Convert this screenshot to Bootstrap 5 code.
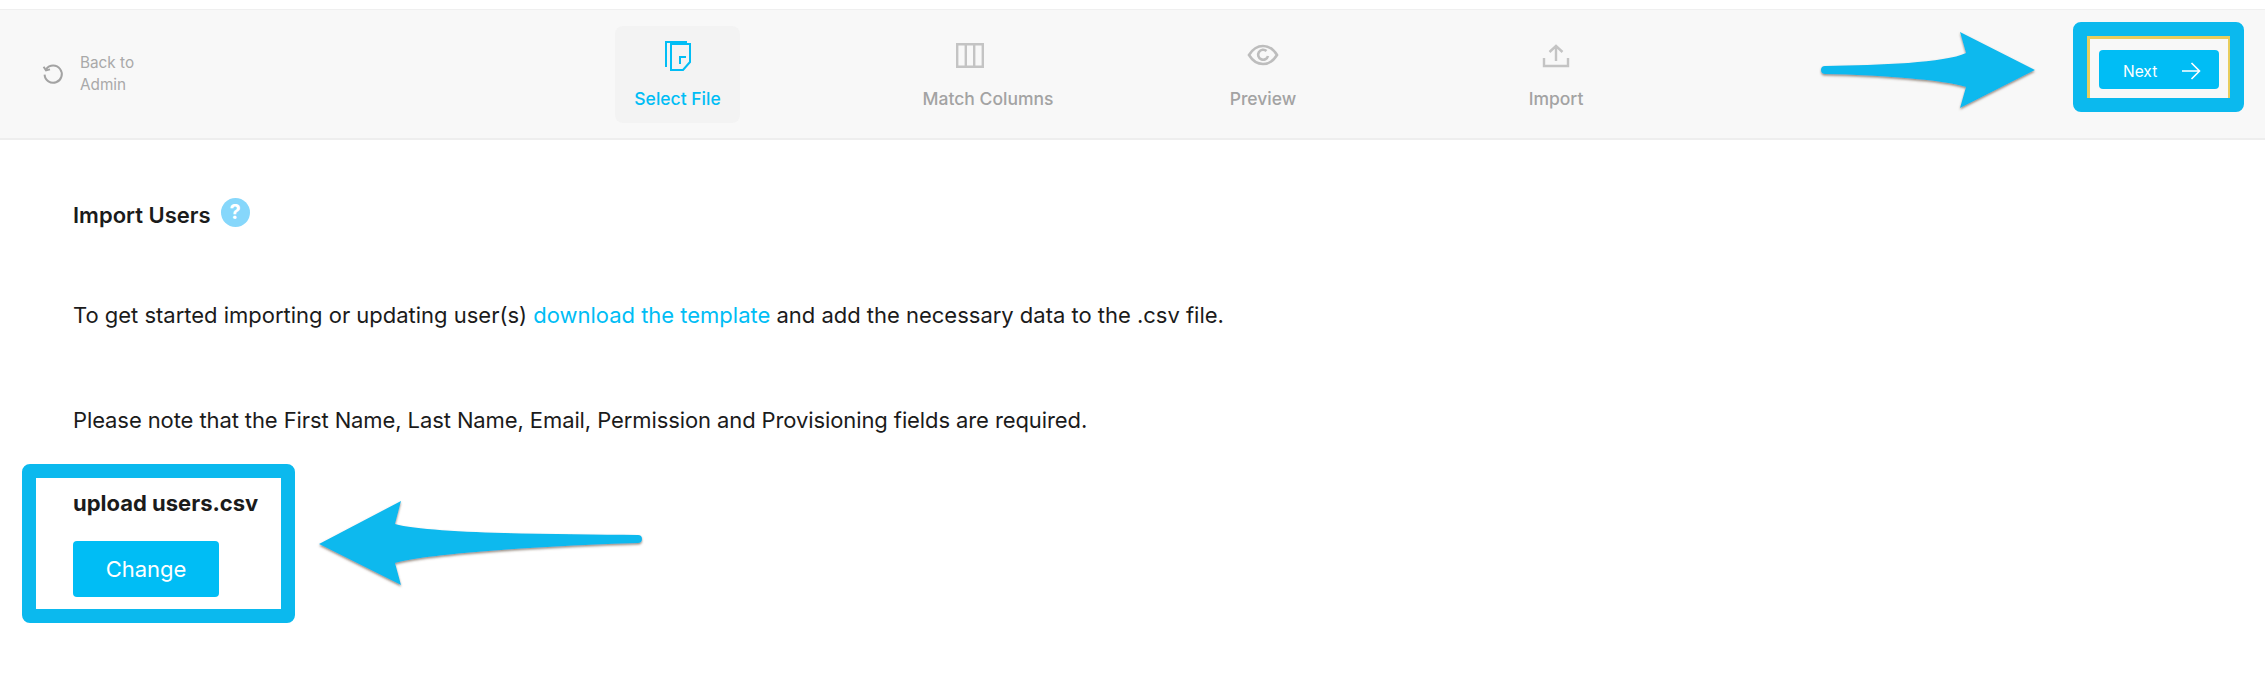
<!DOCTYPE html>
<html lang="en">
<head>
<meta charset="utf-8">
<title>Import Users</title>
<link href="https://cdn.jsdelivr.net/npm/bootstrap@5.3.0/dist/css/bootstrap.min.css" rel="stylesheet">
<style>
body{font-family:Inter,"Liberation Sans",sans-serif;color:#1b1b1b;background:#fff;height:690px;overflow:hidden}
.topbar{margin-top:9px;margin-right:3px;height:131px;background:#f8f8f8;border-top:1px solid #efefef;border-bottom:2px solid #eee}
.backlink{width:615px;padding-left:42px;color:#a9a9a9;font-size:15.300px;line-height:22px;text-decoration:none}
.backlink svg{width:22px;height:22px;margin-right:16px}
.stepitem{display:flex;flex-direction:column;align-items:center;height:97px;padding-top:13px;color:#a3a3a3;font-size:17.500px;font-weight:500;white-space:nowrap;text-decoration:none;border-radius:8px}
.stepitem svg{display:block;height:32px}
.stepitem span{margin-top:16px;line-height:24px}
.step-a{width:125px;background:#f3f3f3;color:#00bdf5}
.step-b{width:170px;margin-left:163px}
.step-b svg{margin-left:-36px}
.step-c{width:106px;margin-left:137px}
.step-d{width:94px;margin-left:193px}
.nextbtn{position:absolute;left:2099px;top:50px;width:120px;height:39px;background:#00bdf5;border:0;color:#fff;font-size:15.500px;border-radius:4px;padding:5px 0 0 24px;text-align:left}
.nextbtn svg{width:20px;height:20px;margin-left:24px;vertical-align:-4px}
.mainarea{padding-left:73px}
.pagetitle{margin:62px 0 0;height:26px;font-size:22px;font-weight:600;line-height:26px;display:flex;align-items:center}
.helpdot{display:flex;align-items:center;justify-content:center;width:29px;height:29px;border-radius:50%;background:#86d7fb;color:#fff;font-size:20px;font-weight:700;margin-left:10px;margin-top:-6px}
.bodyline{font-size:22px;line-height:28px;margin:0;font-weight:400}
.line-one{margin-top:73px;letter-spacing:-.012px}
.line-two{margin-top:77px;letter-spacing:-.1px}
.bodyline a{color:#00bdf5;text-decoration:none}
.filename{margin:55px 0 0;font-size:22px;font-weight:700;line-height:28px}
.changebtn{display:block;width:146px;height:56px;margin-top:24px;background:#00bdf5;border:0;color:#fff;font-size:22px;border-radius:4px;padding:0}
.frame{position:absolute;border-color:#0bb9ee;border-style:solid;border-radius:8px;pointer-events:none}
.frame-top{left:2073px;top:22px;width:171px;height:90px;border-width:14px}
.frame-top::before{content:"";position:absolute;inset:0;border:solid #e8cd5c;border-width:3px 2px 0 3px}
.frame-bottom{left:22px;top:464px;width:273px;height:159px;border-width:14px}
.arrowlayer{position:absolute;left:0;top:0;width:2268px;height:690px;pointer-events:none}
</style>
</head>
<body>
<header class="topbar d-flex align-items-center">
  <a href="#" class="backlink d-flex align-items-center">
    <svg viewBox="0 0 22 22" fill="none" stroke="#a3a3a3" stroke-width="2"><path d="M4.2 6.2A8.6 8.6 0 1 1 2.6 11.6"/><path d="M1.6 3.8l2.4 3.6 4-1" stroke-linejoin="miter"/></svg>
    <span>Back to<br>Admin</span>
  </a>
  <nav class="d-flex align-items-center">
    <a href="#" class="stepitem step-a">
      <svg width="26" height="32" viewBox="0 0 26 32" fill="none" stroke="#00bdf5" stroke-width="2"><path d="M1 28V3H22"/><path d="M6 7H25V25L18 33H6Z" transform="translate(0 -2)"/><path d="M15 27V20H21" transform="translate(0 -2)"/></svg>
      <span>Select File</span>
    </a>
    <a href="#" class="stepitem step-b">
      <svg width="28" height="32" viewBox="0 0 28 32" fill="none" stroke="#c4c4c4" stroke-width="2.4"><path d="M1.2 5.2H26.8V27.8H1.2ZM9.8 5.2V27.8M18.2 5.2V27.8"/></svg>
      <span>Match Columns</span>
    </a>
    <a href="#" class="stepitem step-c">
      <svg width="32" height="32" viewBox="0 0 32 32" fill="none" stroke="#bdbdbd" stroke-width="2.6"><path d="M2 16C6 9.500 11 7 16 7S26 9.500 30 16C26 22.500 21 25 16 25S6 22.500 2 16Z"/><path d="M19.500 12A5 5 0 1 0 21 17"/></svg>
      <span>Preview</span>
    </a>
    <a href="#" class="stepitem step-d">
      <svg width="28" height="32" viewBox="0 0 28 32" fill="none" stroke="#c4c4c4" stroke-width="2.4"><path d="M2 19V27H26V19"/><path d="M14 22V7M7.500 13L14 7L20.500 13"/></svg>
      <span>Import</span>
    </a>
  </nav>
</header>
<main class="mainarea">
  <h1 class="pagetitle">Import Users<span class="helpdot">?</span></h1>
  <p class="bodyline line-one">To get started importing or updating user(s) <a href="#">download the template</a> and add the necessary data to the .csv file.</p>
  <p class="bodyline line-two">Please note that the First Name, Last Name, Email, Permission and Provisioning fields are required.</p>
  <p class="filename">upload users.csv</p>
  <button type="button" class="btn changebtn">Change</button>
</main>
<div class="frame frame-top"></div>
<div class="frame frame-bottom"></div>
<button type="button" class="btn nextbtn">Next<svg viewBox="0 0 20 20" fill="none" stroke="#fff" stroke-width="1.6"><path d="M1 10H18M10.500 2L18.500 10L10.500 18"/></svg></button>
<svg class="arrowlayer" viewBox="0 0 2268 690">
  <defs><filter id="shade" x="-5%" y="-10%" width="110%" height="125%"><feDropShadow dx="0" dy="1.500" stdDeviation="1" flood-color="#6b5a4a" flood-opacity=".7"/></filter></defs>
  <path filter="url(#shade)" fill="#0bb9ee" d="M1825 66C1880 65 1945 63 1966 53L1960 32L2035 70L1960 108L1966 87C1945 80 1880 75 1825 74A4 4 0 0 1 1825 66Z"/>
  <path filter="url(#shade)" fill="#0bb9ee" d="M638 535C560 534 430 534 395 524L401 501L319 544L401 585L395 563C430 553 560 545 638 543A4 4 0 0 0 638 535Z"/>
</svg>
</body>
</html>
